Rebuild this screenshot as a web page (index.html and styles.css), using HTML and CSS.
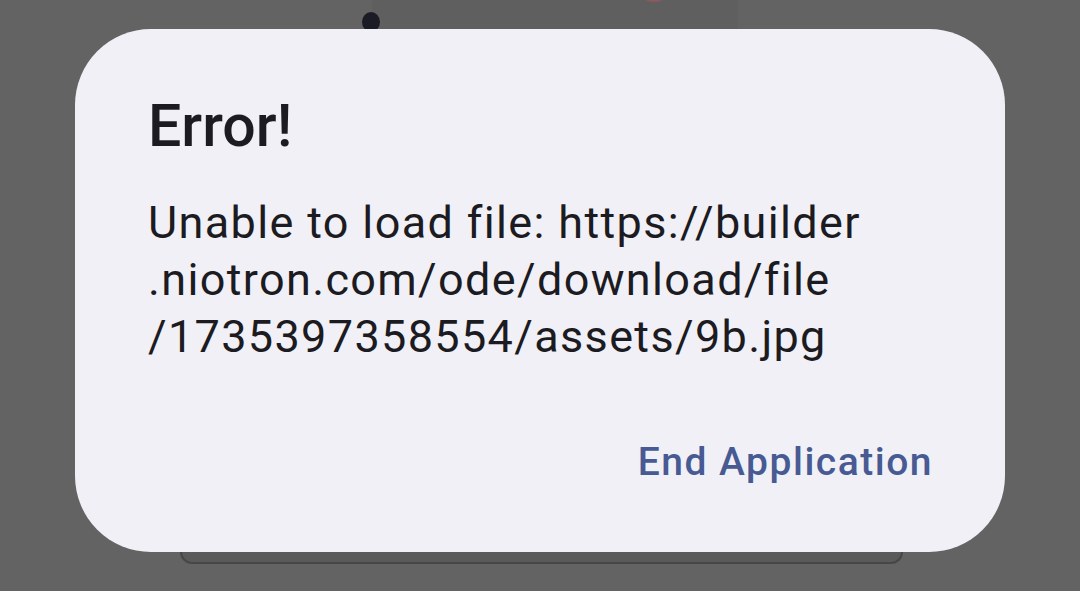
FILE: index.html
```html
<!DOCTYPE html>
<html>
<head>
    <title>Error</title>
    <link rel="stylesheet" href="styles.css">
</head>
<body>
    <div class="backdrop">
        <div class="phone-strip"></div>
        <div class="camera-dot"></div>
        <div class="red-mark"></div>
        <div class="under-card"></div>
    </div>

    <div class="dialog">
        <h1 class="dialog-title">Error!</h1>
        <p class="dialog-text">Unable to load file: https://builder<br>.niotron.com/ode/download/file<br>/1735397358554/assets/9b.jpg</p>
        <div class="dialog-actions">
            <button class="dialog-button">End Application</button>
        </div>
    </div>
</body>
</html>
```

FILE: styles.css
```css
html, body {
    margin: 0;
    height: 100%;
}

body {
    background-color: #636363;
    font-family: Roboto, "Noto Sans", sans-serif;
    overflow: hidden;
    position: relative;
    padding: 29px 75px 0 75px;
    box-sizing: border-box;
}

/* things behind the dialog */
.phone-strip {
    position: absolute;
    top: 0;
    left: 372px;
    width: 366px;
    height: 40px;
    background-color: #5f5f5f;
}

.camera-dot {
    position: absolute;
    top: 12px;
    left: 362px;
    width: 18px;
    height: 20px;
    border-radius: 50%;
    background-color: #1b1b25;
}

.red-mark {
    position: absolute;
    top: -6px;
    left: 644px;
    width: 20px;
    height: 8px;
    border-radius: 50%;
    background-color: #8a5a60;
}

.under-card {
    position: absolute;
    top: 500px;
    left: 180px;
    width: 719px;
    height: 62px;
    border: 2px solid #474747;
    border-top: none;
    border-radius: 0 0 12px 12px;
    background-color: #5a5a5a;
}

.dialog {
    position: relative;
    width: 930px;
    height: 523px;
    box-sizing: border-box;
    background-color: #f0f0f6;
    border-radius: 76px;
    padding: 67px 72px 0 73px;
    display: flex;
    flex-direction: column;
}

.dialog-title {
    margin: 0;
    font-size: 59px;
    line-height: 60px;
    font-weight: 500;
    color: #1c1b21;
}

.dialog-text {
    margin: 38px 0 0 0;
    font-size: 45px;
    line-height: 57px;
    letter-spacing: 1.35px;
    color: #1c1b21;
}

.dialog-actions {
    display: flex;
    justify-content: flex-end;
    margin-top: 78px;
}

.dialog-button {
    border: none;
    background: none;
    padding: 0;
    font-family: inherit;
    font-size: 39px;
    line-height: 39px;
    font-weight: 500;
    letter-spacing: 1.5px;
    color: #475a93;
    cursor: pointer;
}
```
